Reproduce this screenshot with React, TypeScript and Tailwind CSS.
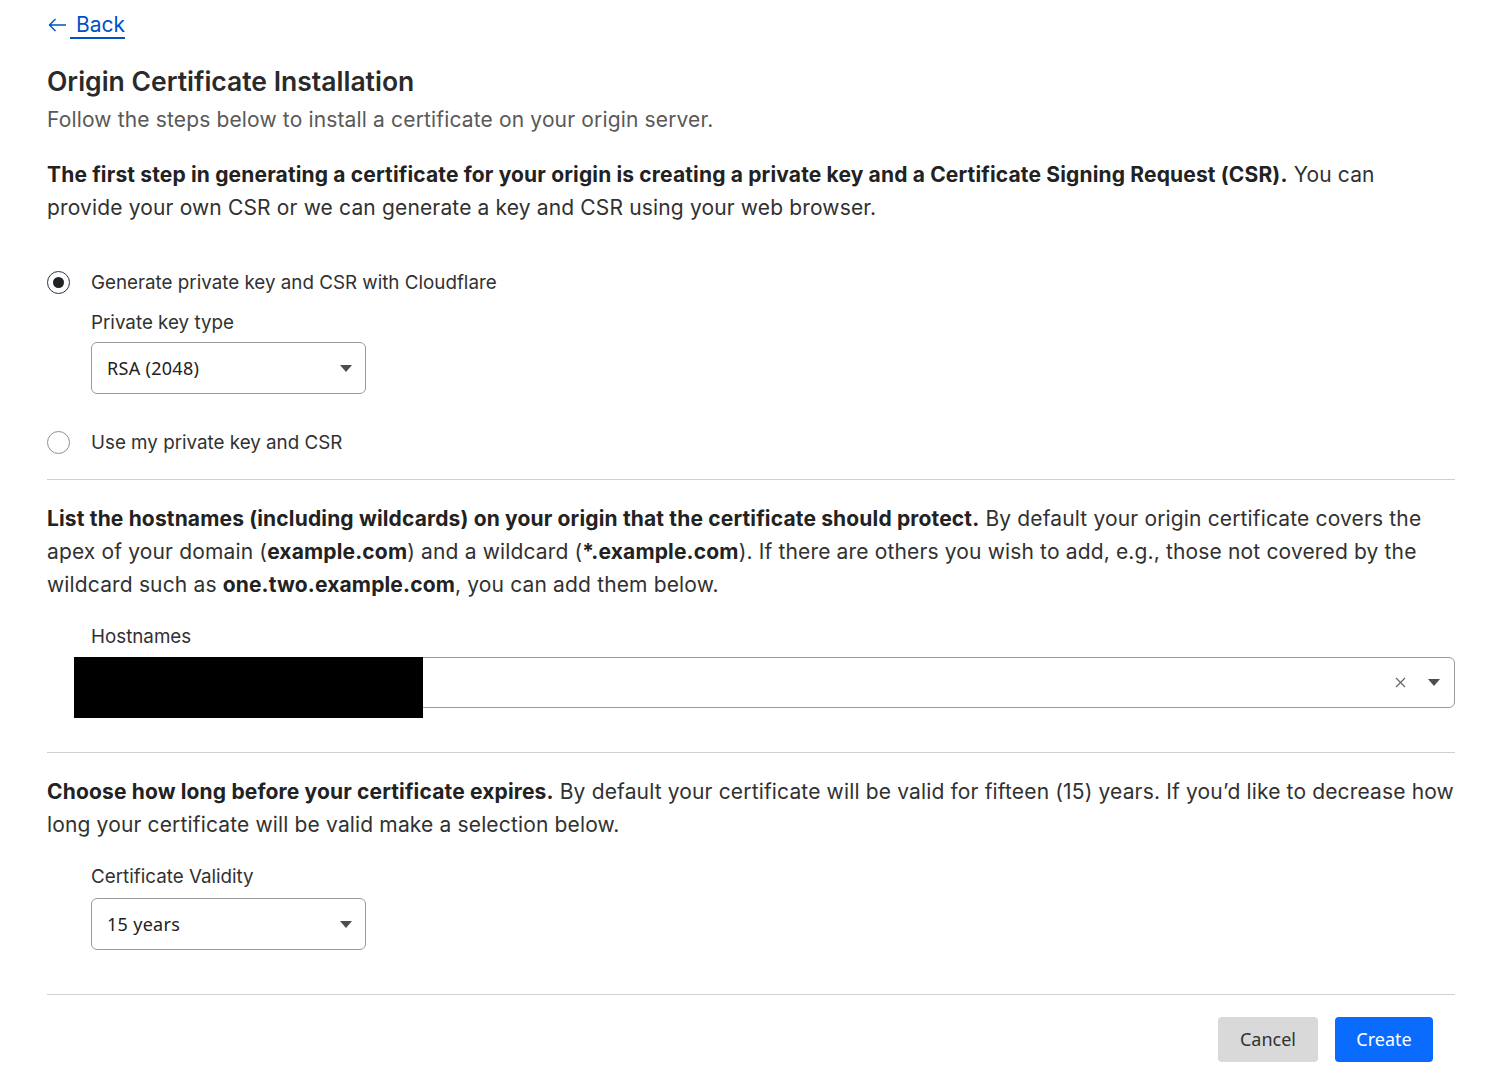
import React from 'react';

const Caret: React.FC = () => (
  <svg width="12" height="7" viewBox="0 0 12 7" className="shrink-0">
    <path d="M0 0 L12 0 L6 7 Z" fill="#4d4d4d" />
  </svg>
);

const Radio: React.FC<{ checked?: boolean; label: string }> = ({ checked, label }) => (
  <label className="flex items-center h-[28px]">
    <span
      className={
        checked
          ? 'flex items-center justify-center w-[23px] h-[23px] rounded-full border-[1.5px] border-[#1f3554] bg-white'
          : 'flex items-center justify-center w-[23px] h-[23px] rounded-full border-[1.5px] border-[#8f8f8f] bg-white'
      }
    >
      {checked && <span className="block w-[11px] h-[11px] rounded-full bg-[#222222]" />}
    </span>
    <span className="ml-[21px] pt-[2px] text-[18.8px] text-[#313131]">{label}</span>
  </label>
);

const SelectBox: React.FC<{ value: string }> = ({ value }) => (
  <div className="flex items-center justify-between w-[275px] h-[52px] rounded-[6px] border border-[#9a9a9a] pl-[15px] pr-[13px] font-['Noto_Sans',sans-serif] text-[18px] tracking-[0.3px] text-[#222222]">
    <span>{value}</span>
    <Caret />
  </div>
);

const App: React.FC = () => {
  return (
    <div className="min-h-screen bg-white font-['Inter',sans-serif] text-[#313131]">
      <div className="ml-[47px] w-[1408px] pt-[11px] pb-[28px]">
        {/* back link */}
        <a href="#" className="flex items-center h-[28px] text-[21px] text-[#0051c3]">
          <svg width="19" height="14" viewBox="0 0 19 14" fill="none" stroke="#0051c3" strokeWidth="1.4" className="ml-[1px]">
            <path d="M18 7 H1.5 M7.5 1 L1.5 7 L7.5 13" />
          </svg>
          <span className="ml-[3px] underline decoration-[2px] underline-offset-[5px]">{'\u00a0'}Back</span>
        </a>

        <h1 className="mt-[24px] text-[26.5px] leading-[36px] font-semibold text-[#2a2a2a]">
          Origin Certificate Installation
        </h1>
        <p className="mt-[6px] text-[21px] leading-[30px] tracking-[0.15px] text-[#595959]">
          Follow the steps below to install a certificate on your origin server.
        </p>

        <p className="mt-[23px] text-[21px] leading-[33px] tracking-[0.15px]">
          <span className="font-bold text-[#222222]">
            The first step in generating a certificate for your origin is creating a private key and a Certificate Signing Request (CSR).
          </span>{' '}
          You can provide your own CSR or we can generate a key and CSR using your web browser.
        </p>

        <div className="mt-[44px]">
          <Radio checked label="Generate private key and CSR with Cloudflare" />
          <div className="ml-[44px]">
            <div className="mt-[12px] h-[28px] flex items-center pt-[2px] text-[18.8px]">Private key type</div>
            <div className="mt-[6px]">
              <SelectBox value="RSA (2048)" />
            </div>
          </div>
          <div className="mt-[34px]">
            <Radio label="Use my private key and CSR" />
          </div>
        </div>

        <hr className="mt-[23px] border-0 border-t border-[#d0d0d0]" />

        <p className="mt-[22px] text-[21px] leading-[33px] tracking-[0.15px]">
          <span className="font-bold text-[#222222]">
            List the hostnames (including wildcards) on your origin that the certificate should protect.
          </span>{' '}
          By default your origin certificate covers the apex of your domain (
          <span className="font-bold text-[#222222]">example.com</span>) and a wildcard (
          <span className="font-bold text-[#222222]">*.example.com</span>). If there are others you wish to add, e.g., those not covered by the wildcard such as{' '}
          <span className="font-bold text-[#222222]">one.two.example.com</span>, you can add them below.
        </p>

        <div className="ml-[44px]">
          <div className="mt-[22px] h-[28px] flex items-center text-[18.8px]">Hostnames</div>
          <div className="relative mt-[6px] flex items-center justify-end h-[51px] rounded-[6px] border border-[#9a9a9a] pr-[14px]">
            <div className="absolute left-[-18px] top-[-1px] w-[349px] h-[61px] bg-black" />
            <svg width="11" height="11" viewBox="0 0 11 11" stroke="#666" strokeWidth="1.2">
              <path d="M1 1 L10 10 M10 1 L1 10" />
            </svg>
            <div className="ml-[22px]">
              <Caret />
            </div>
          </div>
        </div>

        <hr className="mt-[44px] border-0 border-t border-[#d0d0d0]" />

        <p className="mt-[22px] text-[21px] leading-[33px] tracking-[0.15px]">
          <span className="font-bold text-[#222222]">Choose how long before your certificate expires.</span>{' '}
          By default your certificate will be valid for fifteen (15) years. If you’d like to decrease how long your certificate will be valid make a selection below.
        </p>

        <div className="ml-[44px]">
          <div className="mt-[22px] h-[28px] flex items-center pt-[1px] text-[18.8px]">Certificate Validity</div>
          <div className="mt-[7px]">
            <SelectBox value="15 years" />
          </div>
        </div>

        <hr className="mt-[44px] border-0 border-t border-[#d0d0d0]" />

        <div className="mt-[22px] flex justify-end gap-[17px] pr-[22px] font-['Noto_Sans',sans-serif] text-[18px]">
          <button className="w-[100px] h-[45px] rounded-[4px] bg-[#d9d9d9] text-[#313131]">Cancel</button>
          <button className="w-[98px] h-[45px] rounded-[4px] bg-[#0a6cfe] text-white">Create</button>
        </div>
      </div>
    </div>
  );
};

export default App;
